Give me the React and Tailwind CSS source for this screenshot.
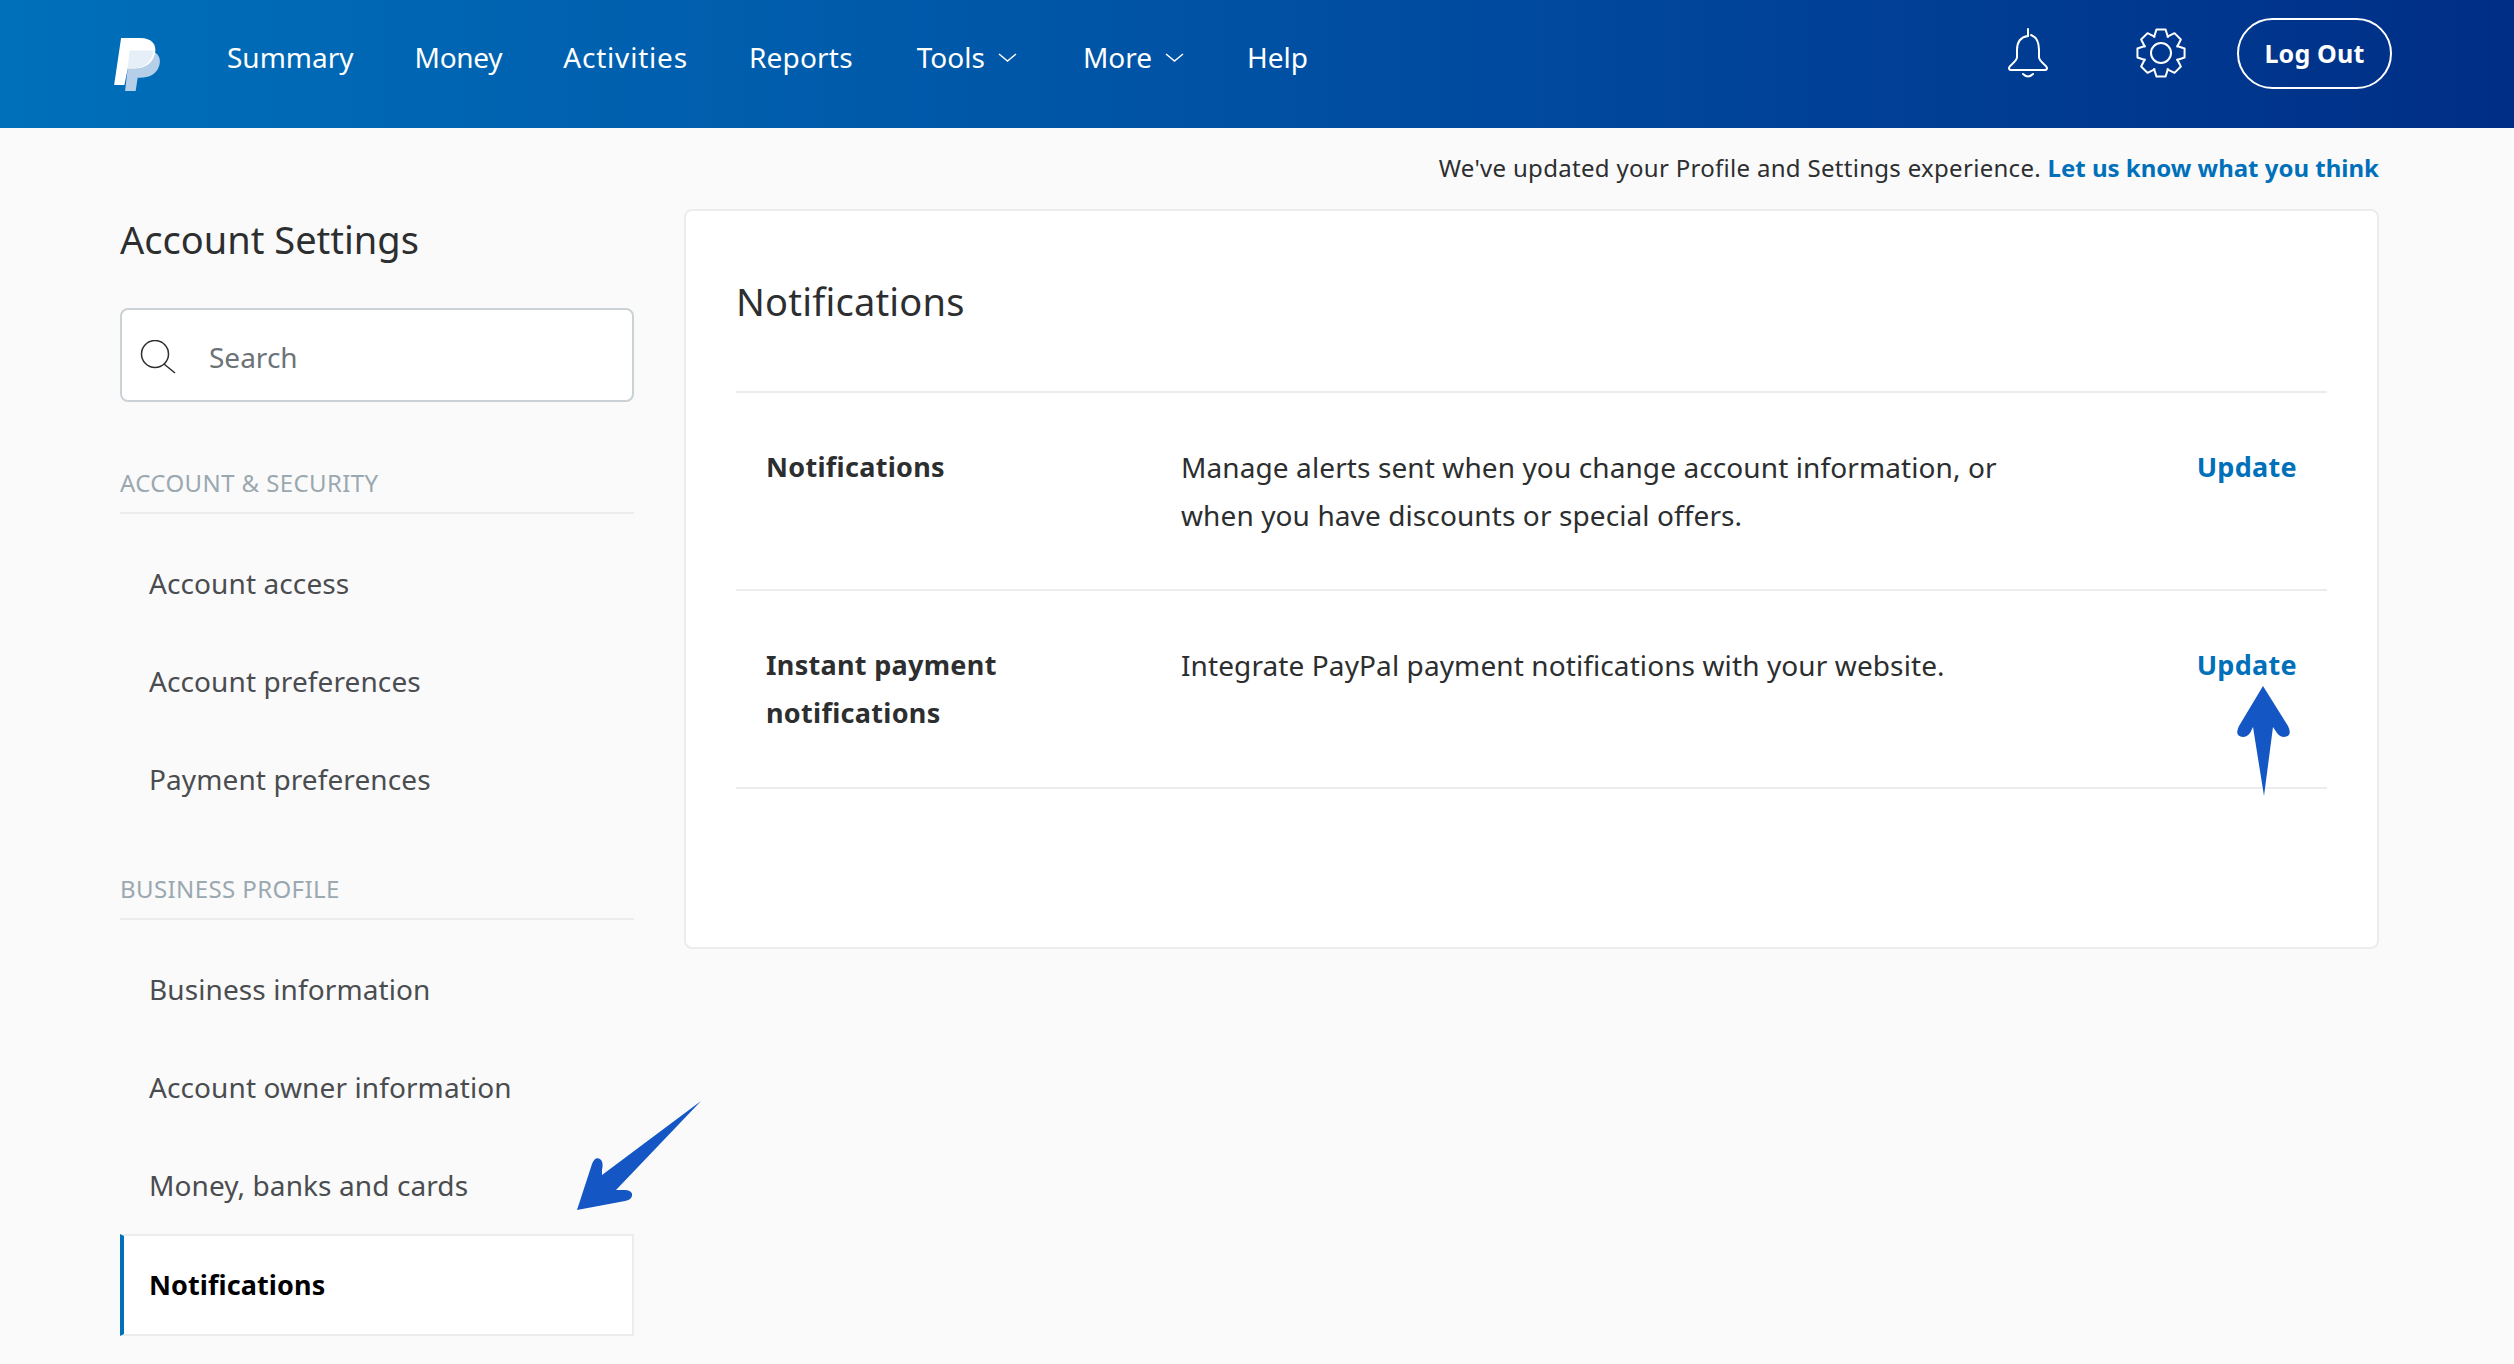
import React from 'react';

const navItems = [
  { label: 'Summary' },
  { label: 'Money', spacing: '-tracking-[0.3px]' },
  { label: 'Activities', spacing: 'tracking-[0.8px]' },
  { label: 'Reports', spacing: 'tracking-[0.2px]' },
  { label: 'Tools', menu: true, spacing: 'ml-[3px]' },
  { label: 'More', menu: true, spacing: 'ml-[3px]' },
  { label: 'Help' }
];

const accountLinks = ['Account access', 'Account preferences', 'Payment preferences'];
const businessLinks = ['Business information', 'Account owner information', 'Money, banks and cards'];

function gearPath() {
  const points = [];
  for (let i = 0; i < 8; i += 1) {
    const a = (i * Math.PI) / 4 - Math.PI / 2;
    const step = Math.PI / 4;
    [[-0.52, 17.5], [-0.24, 24], [0.24, 24], [0.52, 17.5]].forEach(([offset, radius]) => {
      const angle = a + offset * step;
      points.push(`${(25 + radius * Math.cos(angle)).toFixed(2)} ${(25 + radius * Math.sin(angle)).toFixed(2)}`);
    });
  }
  return `M${points.join(' L')} Z`;
}

function Logo() {
  return (
    <svg viewBox="72 30 138 160" className="h-[53px] w-[46px] shrink-0">
      <path d="M119 68 H170 C200 68 216 86 208 114 C200 140 178 150 150 150 H143 L137 190 H105 Z" fill="#b4cfe7" />
      <path d="M93 30 H150 C186 30 202 50 195 78 C187 108 165 122 130 122 H113 L103 172 H72 Z" fill="#ffffff" />
      <path d="M119 68 H192 C184 102 165 122 130 122 H112 Z" fill="#e6eff8" />
    </svg>
  );
}

function Chevron() {
  return (
    <svg viewBox="0 0 19 9" className="ml-[13px] mr-[2px] h-[9px] w-[19px]" fill="none" stroke="#ffffff" strokeWidth="1.5">
      <path d="M1 1 L9.5 8 L18 1" />
    </svg>
  );
}

function Header() {
  return (
    <header className="flex h-[128px] items-center bg-linear-to-r from-[#0070ba] via-[#004a9f] via-60% to-[#002e86] pl-[114px] pr-[122px]">
      <Logo />
      <nav className="mb-[14px] ml-[67px] flex items-center gap-[61px] text-[28px] text-white">
        {navItems.map((item) => (
          <a key={item.label} className={`flex items-center ${item.spacing || ''}`}>
            {item.label}
            {item.menu ? <Chevron /> : null}
          </a>
        ))}
      </nav>
      <div className="mb-[22px] ml-auto flex items-center">
        <svg viewBox="0 0 40 50" className="h-[50px] w-[40px]" fill="none" stroke="#ffffff" strokeWidth="2" strokeLinecap="round">
          <path d="M20 1 V8 C13 9 9 14 9 22 V29 C9 34 1 37 1 40 Q1 42 3 42 H37 Q39 42 39 40 C39 37 31 34 31 29 V22 C31 14 28 9 23 7" />
          <path d="M15 46 Q20 51 25 46" />
        </svg>
        <svg viewBox="0 0 50 50" className="ml-[88px] h-[50px] w-[50px]" fill="none" stroke="#ffffff" strokeWidth="2" strokeLinejoin="round">
          <path d={gearPath()} />
          <circle cx="25" cy="25" r="10" />
        </svg>
        <button type="button" className="ml-[51px] h-[71px] w-[155px] rounded-full border-2 border-white pt-[1px] text-[25px] font-bold tracking-[0.2px] text-white">
          Log Out
        </button>
      </div>
    </header>
  );
}

function SideSection({ title, links, className }) {
  return (
    <div className={className}>
      <p className="border-b-2 border-[#ebeced] pb-[14px] text-[24px] leading-[30px] tracking-[0.4px] text-[#9aa8b0]">{title}</p>
      <ul className="mt-[20px]">
        {links.map((link) => (
          <li key={link} className="flex h-[98px] items-center pl-[29px] text-[28px] tracking-[0.1px] text-[#4a4d4f]">
            {link}
          </li>
        ))}
      </ul>
    </div>
  );
}

function Sidebar() {
  return (
    <aside className="w-[514px] shrink-0">
      <h2 className="text-[38px] leading-[60px] text-[#2c2e2f]">Account Settings</h2>
      <div className="mt-[39px] flex h-[94px] items-center rounded-lg border-2 border-[#cbd2d6] bg-white pl-[18px]">
        <svg viewBox="0 0 36 34" className="mt-[3px] h-[34px] w-[36px]" fill="none" stroke="#2c2e2f" strokeWidth="1.5">
          <circle cx="15" cy="14" r="13.5" />
          <path d="M24 24 L35 33" />
        </svg>
        <span className="ml-[33px] pt-[3px] text-[28px] text-[#6c7378]">Search</span>
      </div>
      <SideSection title="ACCOUNT & SECURITY" links={accountLinks} className="mt-[66px]" />
      <SideSection title="BUSINESS PROFILE" links={businessLinks} className="mt-[46px]" />
      <div className="flex h-[102px] items-center border-2 border-l-4 border-[#ebeced] border-l-[#0070ba] bg-white pl-[25px] text-[27px] font-bold tracking-[0.1px] text-black">
        Notifications
      </div>
    </aside>
  );
}

function SettingRow({ label, text }) {
  return (
    <div className="flex h-[198px] border-b-2 border-[#ebeced] pl-[30px] pr-[30px] pt-[50px] text-[28px] leading-[48px]">
      <p className="w-[415px] shrink-0 pr-[100px] text-[27px] font-bold tracking-[0.3px] text-[#2c2e2f]">{label}</p>
      <p className="max-w-[830px] tracking-[0.1px] text-[#2c2e2f]">{text}</p>
      <a className="ml-auto text-[27px] font-bold tracking-[0.3px] text-[#0070ba]">Update</a>
    </div>
  );
}

function NotificationsCard() {
  return (
    <section className="h-[740px] flex-1 rounded-lg border-2 border-[#ebeced] bg-white px-[50px]">
      <h1 className="border-b-2 border-[#ebeced] pb-[61px] pt-[61px] text-[38px] leading-[58px] tracking-[0.2px] text-[#2c2e2f]">Notifications</h1>
      <SettingRow label="Notifications" text="Manage alerts sent when you change account information, or when you have discounts or special offers." />
      <SettingRow label="Instant payment notifications" text="Integrate PayPal payment notifications with your website." />
    </section>
  );
}

// the two blue annotation arrows sit on top of the page
function Arrows() {
  return (
    <svg viewBox="0 0 2514 1364" className="pointer-events-none absolute left-0 top-0 h-[1364px] w-[2514px]">
      <path d="M2263 686 L2239 726 Q2234 736 2243 737 Q2247 737 2250 733 L2253 727 L2264 796 L2273 727 L2277 733 Q2280 737 2284 737 Q2293 736 2288 726 Z" fill="#1456c4" />
      <path d="M577 1210 L592 1164 Q595 1156 600 1159 Q604 1162 602 1170 L602 1175 L701 1101 L616 1190 L626 1190 Q633 1191 632 1196 Q631 1200 625 1201 Z" fill="#1456c4" />
    </svg>
  );
}

export default function App() {
  return (
    <div className="relative min-h-screen overflow-hidden bg-[#fafafb] font-['Noto_Sans',sans-serif]">
      <Header />
      <main className="pl-[120px] pr-[135px]">
        <p className="flex h-[81px] items-center justify-end pb-[2px] text-[24px] tracking-[0.3px] text-[#2c2e2f]">
          We've updated your Profile and Settings experience.&nbsp;
          <a className="font-bold tracking-normal text-[#0070ba]">Let us know what you think</a>
        </p>
        <div className="flex gap-[50px]">
          <Sidebar />
          <NotificationsCard />
        </div>
      </main>
      <Arrows />
    </div>
  );
}
